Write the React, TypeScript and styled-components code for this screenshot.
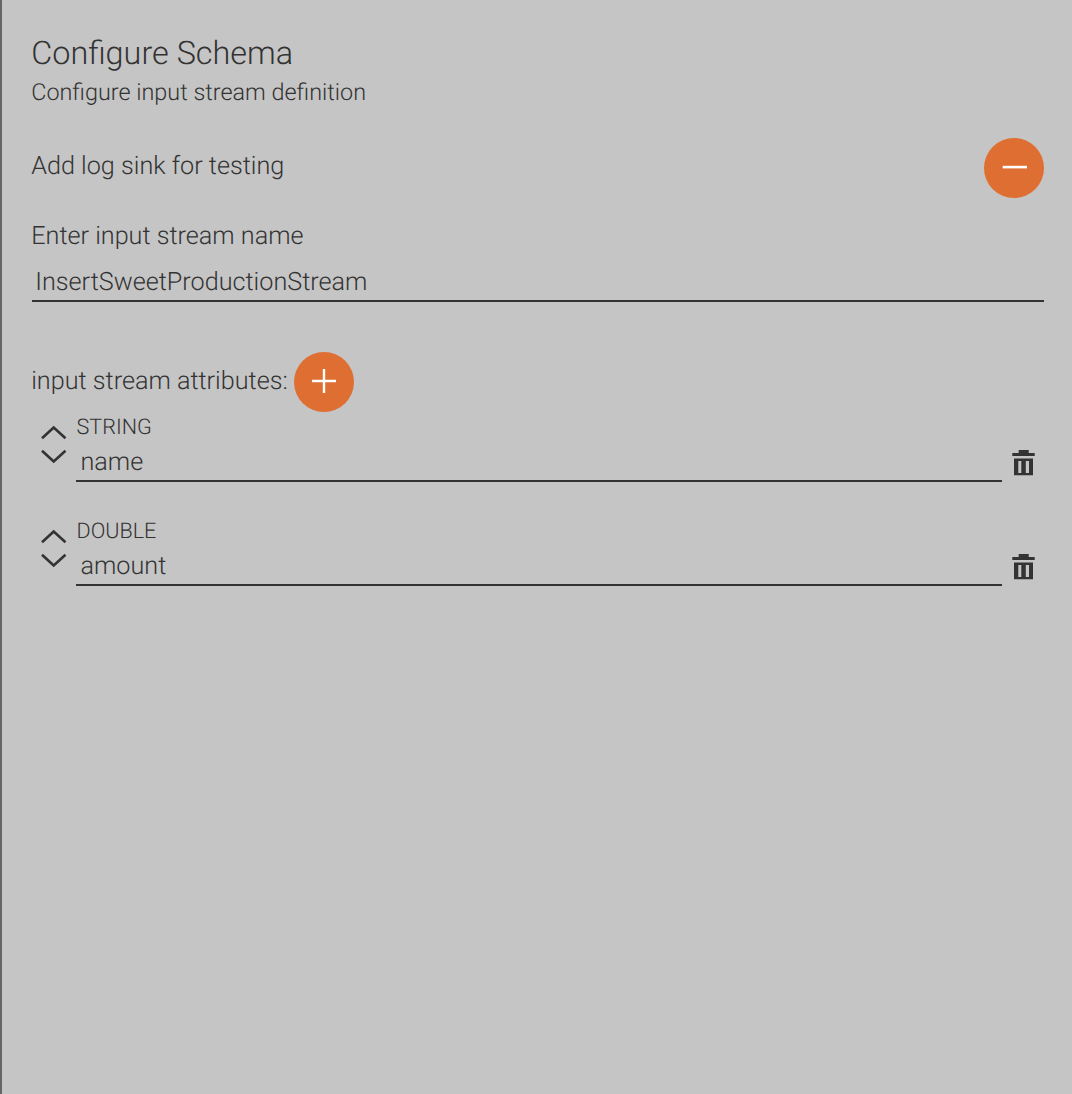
import React from "react";
import styled, { createGlobalStyle } from "styled-components";

const Global = createGlobalStyle`
  *{box-sizing:border-box}
  body{margin:0;background:#c5c5c5;color:#333;font-family:Roboto,sans-serif;font-weight:300;text-rendering:geometricPrecision}
`;
const Panel = styled.main`
  height:1094px;border-left:2px solid #666;padding:34px 28px 0 30px;overflow:hidden;
`;
const Title = styled.h1`margin:0 0 0 -0.8px;font-size:32.4px;line-height:38px;font-weight:300;`;
const Subtitle = styled.p`margin:4px 0 0 -0.8px;font-size:23.4px;line-height:32px;`;
const SinkRow = styled.div`display:flex;justify-content:space-between;height:60px;margin-top:30px;`;
const Label = styled.div`font-size:25.2px;line-height:32px;margin-left:-0.8px;`;
const SinkLabel = styled(Label)`padding-top:13px;`;
const NameLabel = styled(Label)`margin-top:23px;`;
const Circle = styled.button`
  width:60px;height:60px;border:0;border-radius:50%;padding:0;background:#df6e32;color:#fff;display:grid;place-items:center;
`;
const Field = styled.div`
  height:37px;border-bottom:2px solid #333;padding:2px 4px 0 4.5px;font-size:25.2px;line-height:32px;
`;
const NameField = styled(Field)`margin-top:12px;padding-left:3.2px;`;
const AttrHead = styled.div`display:flex;margin-top:50px;height:60px;`;
const AttrLabel = styled(Label)`padding-top:14px;width:262.8px;`;
const Row = styled.div`display:flex;height:104px;`;
const Arrows = styled.div`width:44px;padding:12px 0 0 8px;`;
const Body = styled.div`flex:1;`;
const Type = styled.div`font-size:21.6px;line-height:30px;padding:1px 0 0 0.5px;margin-bottom:2px;`;
const Bin = styled.div`width:42px;padding:37px 0 0 10px;`;

const attributes = [{ name: "name", type: "STRING" }, { name: "amount", type: "DOUBLE" }];

export default function App() {
  return (
    <Panel>
      <Global />
      <Title>Configure Schema</Title>
      <Subtitle>Configure input stream definition</Subtitle>
      <SinkRow>
        <SinkLabel>Add log sink for testing</SinkLabel>
        <Circle aria-label="Remove log sink">
          <svg width="60" height="60" stroke="currentColor" strokeWidth="2.6"><path d="M18.7 29.1H43" /></svg>
        </Circle>
      </SinkRow>
      <NameLabel>Enter input stream name</NameLabel>
      <NameField>InsertSweetProductionStream</NameField>
      <AttrHead>
        <AttrLabel>input stream attributes:</AttrLabel>
        <Circle aria-label="Add attribute">
          <svg width="60" height="60" stroke="currentColor" strokeWidth="2.4"><path d="M18 29H42M30 17V41" /></svg>
        </Circle>
      </AttrHead>
      {attributes.map(a => (
        <Row key={a.name}>
          <Arrows>
            <svg width="28" height="42" fill="none" stroke="#333" strokeWidth="2.6">
              <path d="M2 14.300L13.700 3.500L25.500 14.300M2 26.700L13.700 37.500L25.500 26.700" />
            </svg>
          </Arrows>
          <Body>
            <Type>{a.type}</Type>
            <Field>{a.name}</Field>
          </Body>
          <Bin>
            <svg width="24" height="27" fill="#333"><path d="M6.700 1h10v2.900h6v3.100H.3V3.900h6.400zM2 9.600h19V26.200H2zM6.300 12v12h3V12zM13.800 12v12h3.200V12z" fillRule="evenodd" /></svg>
          </Bin>
        </Row>
      ))}
    </Panel>
  );
}
